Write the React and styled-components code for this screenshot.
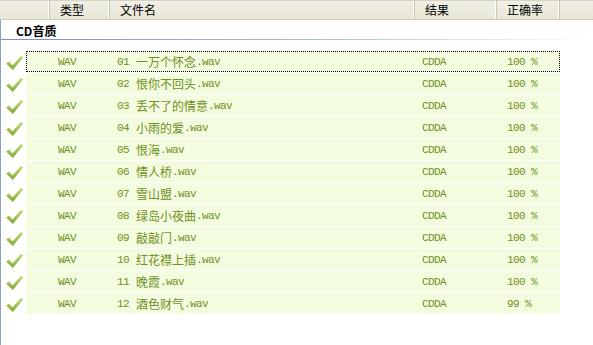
import * as React from 'react';
import styled, { createGlobalStyle } from 'styled-components';

const tracks = [
  { n: '01', title: '一万个怀念', rate: '100' },
  { n: '02', title: '恨你不回头', rate: '100' },
  { n: '03', title: '丢不了的情意', rate: '100' },
  { n: '04', title: '小雨的爱', rate: '100' },
  { n: '05', title: '恨海', rate: '100' },
  { n: '06', title: '情人桥', rate: '100' },
  { n: '07', title: '雪山盟', rate: '100' },
  { n: '08', title: '绿岛小夜曲', rate: '100' },
  { n: '09', title: '敲敲门', rate: '100' },
  { n: '10', title: '红花襟上插', rate: '100' },
  { n: '11', title: '晚霞', rate: '100' },
  { n: '12', title: '酒色财气', rate: '99' },
];

const columns = [
  { label: '', width: 50 },
  { label: '类型', width: 60 },
  { label: '文件名', width: 305 },
  { label: '结果', width: 82 },
  { label: '正确率', width: 63 },
];

const CheckIcon = () => (
  <svg width="19" height="16" viewBox="0 0 19 16">
    <defs>
      <linearGradient id="chk" x1="0" y1="0" x2="0" y2="1">
        <stop offset="0" stopColor="#c4e07a" />
        <stop offset="1" stopColor="#7ea62c" />
      </linearGradient>
    </defs>
    <path d="M1 8.5 L4 6.5 L7.5 10.5 L16 0.8 L18.2 2.6 L7.8 15 Z" fill="url(#chk)" />
  </svg>
);

const App = () => {
  return (
    <>
      <GlobalStyle />
      <Window>
        <HeaderBar>
          {columns.map((c, i) => (
            <HeaderCell key={i} $width={c.width}>
              {c.label}
            </HeaderCell>
          ))}
          <HeaderFill />
        </HeaderBar>
        <ListBody>
          <GroupTitle>CD音质</GroupTitle>
          <Rows>
            {tracks.map((t, i) => (
              <Row key={t.n}>
                <IconCell>
                  <CheckIcon />
                </IconCell>
                <Band $focused={i === 0}>
                  <TypeCell>WAV</TypeCell>
                  <NameCell>
                    <Ascii>{t.n}</Ascii>
                    <Title>{t.title}</Title>
                    <Ascii>.wav</Ascii>
                  </NameCell>
                  <ResultCell>CDDA</ResultCell>
                  <RateCell>{t.rate} %</RateCell>
                </Band>
              </Row>
            ))}
          </Rows>
        </ListBody>
      </Window>
    </>
  );
};

const GlobalStyle = createGlobalStyle`
  html, body {
    margin: 0;
    padding: 0;
    background: #ffffff;
    overflow: hidden;
  }
`;

const Window = styled.div`
  width: 593px;
  height: 345px;
  display: flex;
  flex-direction: column;
  font-family: 'Noto Sans CJK SC', sans-serif;
  font-size: 12px;
  color: #000;
`;

const HeaderBar = styled.div`
  display: flex;
  height: 20px;
  box-sizing: border-box;
  border-top: 1px solid #d6d3c6;
  border-bottom: 1px solid #cfcbb8;
  background: linear-gradient(#f0efe4, #e8e6d6);
`;

const HeaderCell = styled.div`
  flex: 0 0 ${(p) => p.$width}px;
  box-sizing: border-box;
  padding-left: 10px;
  border-right: 1px solid #c8c5b2;
  box-shadow: inset -1px 0 0 #ffffff;
  line-height: 18px;
  font-size: 12px;
  white-space: nowrap;
`;

const HeaderFill = styled.div`
  flex: 1;
`;

const ListBody = styled.div`
  flex: 1;
  border-left: 1px solid #8aa0c8;
  display: flex;
  flex-direction: column;
`;

const GroupTitle = styled.div`
  margin-top: 3px;
  padding-left: 15px;
  height: 15px;
  line-height: 15px;
  font-weight: 700;
  font-size: 12px;
  padding-bottom: 1px;
  &::after {
    content: '';
    display: block;
    height: 1px;
    margin-left: -15px;
    margin-top: 1px;
    background: linear-gradient(to right, #6f93cf, #a9c0e4 55%, #ffffff);
  }
`;

const Rows = styled.div`
  margin-top: 12px;
  display: flex;
  flex-direction: column;
  gap: 1px;
`;

const Row = styled.div`
  display: flex;
  height: 21px;
`;

const IconCell = styled.div`
  flex: 0 0 25px;
  display: flex;
  align-items: flex-end;
  justify-content: center;
  padding-left: 2px;
  padding-bottom: 1px;
  box-sizing: border-box;
`;

const Band = styled.div`
  flex: 0 0 534px;
  display: flex;
  align-items: center;
  box-sizing: border-box;
  background: #f4fcdf;
  border: 1px dotted ${(p) => (p.$focused ? '#000' : 'transparent')};
  color: #6f8f22;
  font-family: 'Liberation Mono', 'Noto Sans CJK SC', monospace;
  font-size: 11px;
  letter-spacing: -0.6px;
`;

const TypeCell = styled.div`
  flex: 0 0 83px;
  padding-left: 31px;
  box-sizing: border-box;
`;

const NameCell = styled.div`
  flex: 0 0 305px;
  padding-left: 7px;
  box-sizing: border-box;
  display: flex;
  align-items: center;
  white-space: nowrap;
`;

const Ascii = styled.span`
  font-family: 'Liberation Mono', monospace;
  font-size: 11px;
`;

const Title = styled.span`
  font-family: 'Noto Sans CJK SC', sans-serif;
  font-size: 12px;
  letter-spacing: 0;
  margin-left: 7px;
`;

const ResultCell = styled.div`
  flex: 0 0 82px;
  padding-left: 7px;
  box-sizing: border-box;
`;

const RateCell = styled.div`
  flex: 1;
  padding-left: 10px;
  box-sizing: border-box;
`;

export default App;
